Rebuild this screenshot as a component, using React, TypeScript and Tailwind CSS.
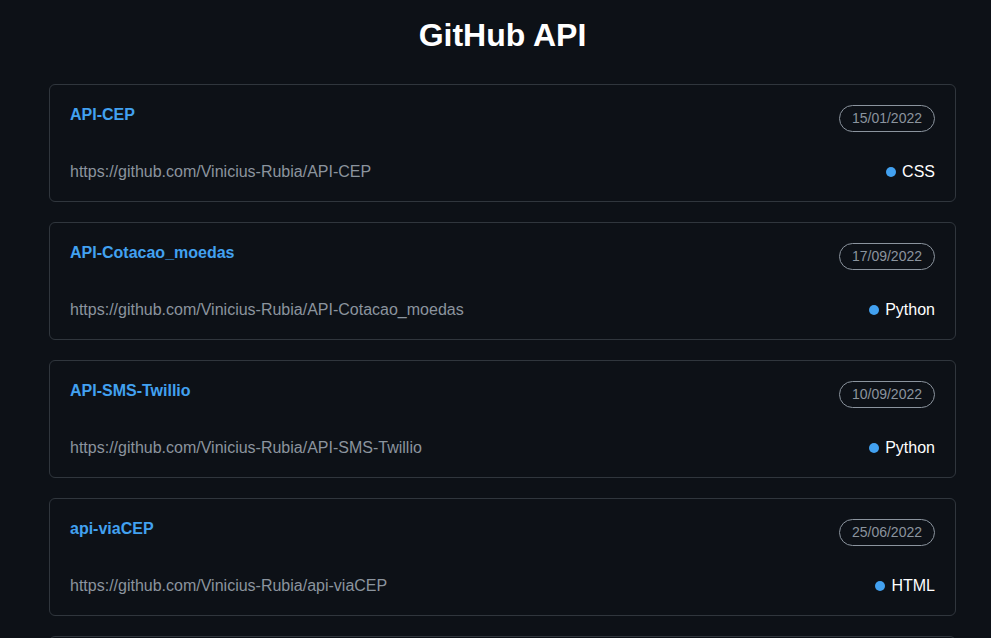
const repos = [
  { name: 'API-CEP', date: '15/01/2022', lang: 'CSS' },
  { name: 'API-Cotacao_moedas', date: '17/09/2022', lang: 'Python' },
  { name: 'API-SMS-Twillio', date: '10/09/2022', lang: 'Python' },
  { name: 'api-viaCEP', date: '25/06/2022', lang: 'HTML' },
  { name: 'Calculadora', date: '02/03/2022', lang: 'JavaScript' },
];

export default function App() {
  return (
    <div className="h-screen overflow-y-auto bg-[#0d1117] pl-[49px] pr-[35px] pb-10 font-['Liberation_Sans',Arial,sans-serif] [scrollbar-width:none]">
      <h1 className="pt-[17px] pb-[30px] text-center text-[32px] font-bold leading-[37px] text-white">
        GitHub API
      </h1>
      <div className="flex flex-col gap-5 pb-10">
        {repos.map((repo) => (
          <div key={repo.name} className="rounded-md border border-[#30363d] px-5 pt-5 pb-5">
            <div className="flex items-start justify-between">
              <a className="pt-[1px] text-base font-bold leading-[18px] text-[#42a1f0]">{repo.name}</a>
              <span className="rounded-full border border-[#8b949e] px-3 py-1 text-sm leading-[17px] text-[#8b949e]">
                {repo.date}
              </span>
            </div>
            <div className="mt-[31px] flex items-center justify-between">
              <span className="text-base leading-[18px] text-[#8b949e]">
                https://github.com/Vinicius-Rubia/{repo.name}
              </span>
              <span className="flex items-center gap-[6px] text-base leading-[18px] text-white">
                <span className="h-[10px] w-[10px] rounded-full bg-[#42a1f0]" />
                {repo.lang}
              </span>
            </div>
          </div>
        ))}
      </div>
    </div>
  );
}
